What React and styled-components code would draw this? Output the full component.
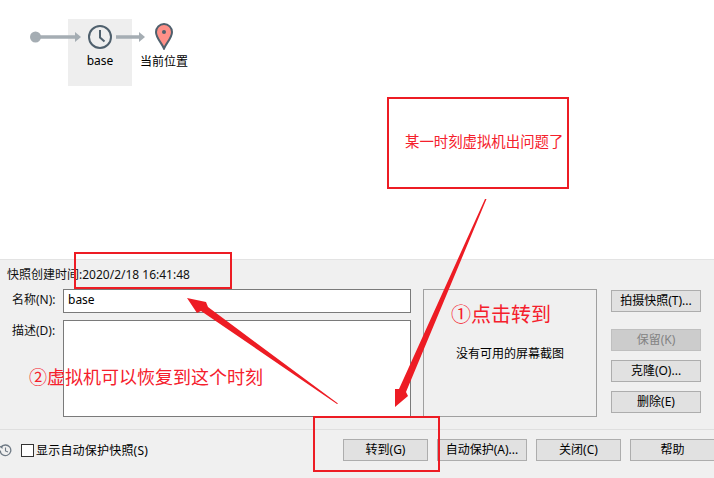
import React from 'react';
import styled, { createGlobalStyle } from 'styled-components';

const GlobalStyle = createGlobalStyle`
  html, body {
    margin: 0;
    padding: 0;
    background: #fff;
  }
  body {
    font-family: "Noto Sans", "Noto Sans CJK SC", sans-serif;
    font-size: 12px;
    color: #000;
  }
`;

const Page = styled.div`
  position: relative;
  width: 714px;
  height: 478px;
  overflow: hidden;
  display: flex;
  flex-direction: column;
`;

const Canvas = styled.div`
  height: 259px;
  flex: none;
  background: #fff;
  display: flex;
  align-items: flex-start;
  padding: 19px 0 0 28px;
  box-sizing: border-box;
`;

const NodeBox = styled.div`
  width: ${(p) => p.$width}px;
  height: 67px;
  flex: none;
  display: flex;
  flex-direction: column;
  align-items: center;
  padding-top: ${(p) => p.$pad}px;
  box-sizing: border-box;
  background: ${(p) => (p.$active ? '#eeeeee' : 'transparent')};
`;

const NodeLabel = styled.span`
  font-size: 12px;
  line-height: 16px;
  margin-top: ${(p) => p.$gap}px;
  white-space: nowrap;
`;

const Link = styled.svg`
  flex: none;
  position: relative;
  margin-left: ${(p) => p.$before || 0}px;
  margin-right: ${(p) => p.$after || 0}px;
`;

const Panel = styled.div`
  flex: 1;
  background: #f0f0f0;
  border-top: 1px solid #e3e3e3;
  display: flex;
  flex-direction: column;
`;

const Details = styled.div`
  height: 170px;
  box-sizing: border-box;
  padding: 7px 13px 0 7px;
  border-bottom: 1px solid #dfdfdf;
`;

const TimeRow = styled.div`
  height: 16px;
  line-height: 16px;
  font-size: 12px;
  white-space: nowrap;
  color: #111;
`;

const Columns = styled.div`
  display: flex;
  margin-top: 6px;
`;

const Fields = styled.div`
  width: 404px;
  display: grid;
  grid-template-columns: 56px 348px;
  grid-template-rows: 24px 97px;
  row-gap: 7px;
`;

const FieldLabel = styled.label`
  padding-left: 5px;
  line-height: 22px;
  font-size: 12px;
  white-space: nowrap;
  color: #111;
`;

const TextField = styled.div`
  box-sizing: border-box;
  background: #fff;
  border: 1px solid #7a7a7a;
  padding: 2px 4px;
  font-size: 12px;
  line-height: 16px;
`;

const Preview = styled.div`
  box-sizing: border-box;
  width: 174px;
  height: 128px;
  margin-left: 12px;
  border: 1px solid #a0a0a0;
  display: flex;
  align-items: center;
  justify-content: center;
  font-size: 12px;
`;

const SideButtons = styled.div`
  margin-left: 14px;
  padding-top: 1px;
  display: flex;
  flex-direction: column;
`;

const Button = styled.button`
  box-sizing: border-box;
  flex: none;
  width: ${(p) => p.$width || 90}px;
  height: 22px;
  margin-top: ${(p) => p.$top || 0}px;
  padding: 0;
  background: ${(p) => (p.disabled ? '#cccccc' : '#e1e1e1')};
  border: 1px solid ${(p) => (p.disabled ? '#bfbfbf' : '#adadad')};
  color: ${(p) => (p.disabled ? '#838383' : '#000')};
  font-family: inherit;
  font-size: 12px;
  line-height: 18px;
  white-space: nowrap;
`;

const Footer = styled.div`
  flex: 1;
  display: flex;
  align-items: flex-start;
  padding-top: 9px;
`;

const AutoToggle = styled.div`
  display: flex;
  align-items: center;
  height: 22px;
  width: 343px;
  flex: none;
`;

const CheckBox = styled.span`
  box-sizing: border-box;
  width: 13px;
  height: 13px;
  margin-left: 9px;
  background: #fff;
  border: 1px solid #333;
`;

const ToggleText = styled.span`
  margin-left: 2px;
  font-size: 12px;
  letter-spacing: 0.2px;
`;

const FooterButtons = styled.div`
  display: flex;
  gap: 9px;
`;

const Note = styled.div`
  position: absolute;
  left: ${(p) => p.$left}px;
  top: ${(p) => p.$top}px;
  color: #f5202c;
  font-size: ${(p) => p.$size}px;
  line-height: 1.2;
  white-space: nowrap;
`;

const Frame = styled.div`
  position: absolute;
  box-sizing: border-box;
  left: ${(p) => p.$left}px;
  top: ${(p) => p.$top}px;
  width: ${(p) => p.$width}px;
  height: ${(p) => p.$height}px;
  border: 2px solid #ed1c24;
`;

const ArrowLayer = styled.svg`
  position: absolute;
  left: 0;
  top: 0;
  pointer-events: none;
`;

const NextLink = () => (
  <Link $before={-16} width="29" height="36" viewBox="0 0 29 36">
    <path d="M0 18H23" stroke="#a5adb3" strokeWidth="3.5" />
    <path d="M23 13L29 18L23 23Z" fill="#a5adb3" />
  </Link>
);

const StartLink = () => (
  <Link $after={-13} width="53" height="36" viewBox="0 0 53 36">
    <circle cx="7.500" cy="18" r="5.500" fill="#a5adb3" />
    <path d="M7 18H47" stroke="#a5adb3" strokeWidth="3.5" />
    <path d="M47 13L53 18L47 23Z" fill="#a5adb3" />
  </Link>
);

const ClockIcon = () => (
  <svg width="26" height="26" viewBox="0 0 26 26">
    <circle cx="13" cy="13" r="11" fill="none" stroke="#4f606d" strokeWidth="2" />
    <path d="M13 6V13.500L17.500 17.500" fill="none" stroke="#4f606d" strokeWidth="2" />
  </svg>
);

const PinIcon = () => (
  <svg width="20" height="28" viewBox="0 0 20 28">
    <path d="M10 26.500C7.500 20.500 2 16 2 10a8 8 0 0 1 16 0c0 6-5.500 10.500-8 16.500Z" fill="#ff9088" stroke="#4f606d" strokeWidth="2" />
    <circle cx="10" cy="10" r="2" fill="#4f606d" />
  </svg>
);

const HistoryIcon = () => (
  <svg width="13" height="13" viewBox="0 0 13 13" style={{ flex: 'none', marginLeft: -1 }}>
    <path d="M2 3.500A5.300 5.300 0 1 1 1.200 6.500" fill="none" stroke="#6f7a85" strokeWidth="1.300" />
    <path d="M0.500 2.500L3.500 1.500L3.500 5Z" fill="#6f7a85" />
    <path d="M6.500 3.500V7L9 8" fill="none" stroke="#6f7a85" strokeWidth="1.100" />
  </svg>
);

export default function App() {
  return (
    <Page>
      <GlobalStyle />
      <Canvas>
        <StartLink />
        <NodeBox $width={64} $pad={5} $active>
          <ClockIcon />
          <NodeLabel $gap={3}>base</NodeLabel>
        </NodeBox>
        <NextLink />
        <NodeBox $width={38} $pad={3}>
          <PinIcon />
          <NodeLabel $gap={4}>当前位置</NodeLabel>
        </NodeBox>
      </Canvas>
      <Panel>
        <Details>
          <TimeRow>快照创建时间:2020/2/18 16:41:48</TimeRow>
          <Columns>
            <Fields>
              <FieldLabel>名称(N):</FieldLabel>
              <TextField>base</TextField>
              <FieldLabel>描述(D):</FieldLabel>
              <TextField />
            </Fields>
            <Preview>没有可用的屏幕截图</Preview>
            <SideButtons>
              <Button>拍摄快照(T)...</Button>
              <Button $top={17} disabled>保留(K)</Button>
              <Button $top={9}>克隆(O)...</Button>
              <Button $top={9}>删除(E)</Button>
            </SideButtons>
          </Columns>
        </Details>
        <Footer>
          <AutoToggle>
            <HistoryIcon />
            <CheckBox />
            <ToggleText>显示自动保护快照(S)</ToggleText>
          </AutoToggle>
          <FooterButtons>
            <Button $width={85}>转到(G)</Button>
            <Button>自动保护(A)...</Button>
            <Button $width={85}>关闭(C)</Button>
            <Button $width={85}>帮助</Button>
          </FooterButtons>
        </Footer>
      </Panel>

      <Frame $left={387} $top={97} $width={182} $height={92} />
      <Frame $left={74} $top={252} $width={158} $height={37} />
      <Frame $left={313} $top={416} $width={127} $height={56} />
      <Note $left={405} $top={133} $size={14.4}>某一时刻虚拟机出问题了</Note>
      <Note $left={451} $top={303} $size={20}>①点击转到</Note>
      <Note $left={29} $top={367} $size={18}>②虚拟机可以恢复到这个时刻</Note>
      <ArrowLayer width="714" height="478" viewBox="0 0 714 478">
        <path d="M486.500 199L406 392L408 396L395 407L395 389L399 389L485 199Z" fill="#ed1c24" />
        <path d="M338 403.500L208 307L206 302L187 298L197 313L201 311L337 404Z" fill="#ed1c24" />
      </ArrowLayer>
    </Page>
  );
}
